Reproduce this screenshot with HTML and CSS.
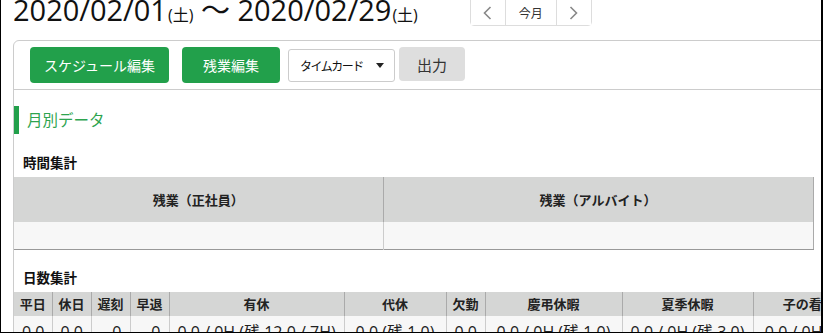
FILE: index.html
```html
<html>
  <head>
    <title>月別データ</title>
    <meta charset="utf-8" />
    <link rel="stylesheet" href="styles.css">
  </head>
  <body>
    <div class="frame"></div>

    <header class="top">
      <h1 class="range">2020/02/01<small>(土)</small> 〜 2020/02/29<small>(土)</small></h1>
      <div class="pager">
        <button class="pager-btn arrow">
          <svg width="9" height="14" viewBox="0 0 9 14"><polyline points="7.5,1 1.5,7 7.5,13" fill="none" stroke="#888" stroke-width="1.6" /></svg>
        </button>
        <button class="pager-btn now">今月</button>
        <button class="pager-btn arrow">
          <svg width="9" height="14" viewBox="0 0 9 14"><polyline points="1.5,1 7.5,7 1.5,13" fill="none" stroke="#888" stroke-width="1.6" /></svg>
        </button>
      </div>
    </header>

    <section class="panel">
      <div class="toolbar">
        <button class="btn green">スケジュール編集</button>
        <button class="btn green overtime">残業編集</button>
        <div class="select">
          <span>タイムカード</span>
          <i class="caret"></i>
        </div>
        <button class="btn gray">出力</button>
      </div>

      <div class="content">
        <h2 class="section-title">月別データ</h2>

        <h3 class="sub">時間集計</h3>
        <table class="sum hours">
          <colgroup>
            <col style="width: 369px" />
            <col style="width: 430px" />
          </colgroup>
          <thead>
            <tr>
              <th>残業（正社員）</th>
              <th>残業（アルバイト）</th>
            </tr>
          </thead>
          <tbody>
            <tr>
              <td></td>
              <td></td>
            </tr>
          </tbody>
        </table>

        <h3 class="sub">日数集計</h3>
        <table class="sum days">
          <colgroup>
            <col style="width: 38px" />
            <col style="width: 39px" />
            <col style="width: 39px" />
            <col style="width: 39px" />
            <col style="width: 175px" />
            <col style="width: 102px" />
            <col style="width: 39px" />
            <col style="width: 137px" />
            <col style="width: 131px" />
            <col style="width: 137px" />
          </colgroup>
          <thead>
            <tr>
              <th>平日</th>
              <th>休日</th>
              <th>遅刻</th>
              <th>早退</th>
              <th>有休</th>
              <th>代休</th>
              <th>欠勤</th>
              <th>慶弔休暇</th>
              <th>夏季休暇</th>
              <th>子の看護休暇</th>
            </tr>
          </thead>
          <tbody>
            <tr>
              <td class="num">0.0</td>
              <td class="num">0.0</td>
              <td class="num">0</td>
              <td class="num">0</td>
              <td>0.0 / 0H (残 12.0 / 7H)</td>
              <td>0.0 (残 1.0)</td>
              <td class="num">0.0</td>
              <td>0.0 / 0H (残 1.0)</td>
              <td>0.0 / 0H (残 3.0)</td>
              <td>0.0 / 0H (残 5.0)</td>
            </tr>
          </tbody>
        </table>
      </div>
    </section>
  </body>
</html>
```

FILE: styles.css
```css
html,
body {
  height: 100%;
}

body {
  margin: 0;
  padding-left: 13px;
  overflow: hidden;
  background: #fff;
  color: #222;
  font: 13px "Open Sans", "Noto Sans CJK JP", sans-serif;
}

/* window edge of the capture */
.frame {
  position: fixed;
  top: 0;
  left: 0;
  right: 0;
  bottom: 0;
  border-left: 1px solid #000;
  border-right: 2px solid #000;
  border-bottom: 1px solid #000;
  pointer-events: none;
  z-index: 10;
}

.top {
  display: flex;
  align-items: flex-start;
  height: 40px;
}

.range {
  margin: -7px 0 0;
  font-size: 29px;
  font-weight: normal;
  line-height: 34px;
  color: #111;
  white-space: nowrap;
}
.range small {
  font-size: 16px;
  margin-left: 1px;
}

.pager {
  display: flex;
  margin-left: 52px;
  margin-top: -1px;
  height: 27px;
  border: 1px solid #ddd;
  border-radius: 0 0 4px 4px;
  box-sizing: border-box;
}
.pager-btn {
  appearance: none;
  border: 0;
  background: #fff;
  margin: 0;
  padding: 0;
  display: flex;
  align-items: center;
  justify-content: center;
  font: 12px "Open Sans", "Noto Sans CJK JP", sans-serif;
  color: #333;
}
.pager-btn.arrow {
  width: 34px;
}
.pager-btn.now {
  width: 52px;
  border-left: 1px solid #ddd;
  border-right: 1px solid #ddd;
}

.panel {
  border: 1px solid #ccc;
  border-radius: 6px;
  margin-right: -40px;
}

.toolbar {
  display: flex;
  align-items: flex-start;
  padding: 6px 16px;
  border-bottom: 1px solid #ccc;
}

.btn {
  appearance: none;
  border: 0;
  border-radius: 4px;
  margin: 0;
  font: 14px "Open Sans", "Noto Sans CJK JP", sans-serif;
  cursor: pointer;
}
.btn.green {
  height: 36px;
  padding: 0 14px;
  background: #22a04b;
  color: #fff;
  margin-right: 13px;
}
.btn.green.overtime {
  padding: 0 21px;
  margin-right: 8px;
}
.btn.gray {
  height: 34px;
  width: 66px;
  background: #dedede;
  color: #333;
  font-size: 15px;
}

.select {
  display: flex;
  align-items: center;
  justify-content: space-between;
  box-sizing: border-box;
  width: 107px;
  height: 33px;
  margin-top: 2px;
  margin-right: 4px;
  padding: 0 10px 0 11px;
  border: 1px solid #ccc;
  border-radius: 3px;
  font-size: 12px;
  letter-spacing: -1.5px;
  white-space: nowrap;
  color: #111;
}
.caret {
  width: 0;
  height: 0;
  border-left: 4px solid transparent;
  border-right: 4px solid transparent;
  border-top: 5px solid #222;
}

.section-title {
  margin: 16px 0 0;
  height: 28px;
  line-height: 28px;
  border-left: 5px solid #22a04b;
  padding-left: 8px;
  font-size: 15.5px;
  font-weight: normal;
  color: #2ea44f;
}

.sub {
  margin: 19px 0 4px;
  padding-left: 9px;
  font-size: 13.5px;
  line-height: 20px;
  font-weight: bold;
  color: #111;
}
.section-title + .sub {
  margin-top: 19px;
}
.sum + .sub {
  margin-top: 18px;
}

.sum {
  border-collapse: collapse;
  table-layout: fixed;
}
.sum th {
  background: #d5d6d5;
  font-size: 13px;
  font-weight: bold;
  color: #222;
  padding: 0;
  border-left: 1px solid #aaa;
  white-space: nowrap;
  overflow: hidden;
}
.sum th:first-child {
  border-left: 0;
}
.sum td {
  background: #f7f7f7;
  border-left: 1px solid #ccc;
  padding: 0 8px;
  white-space: nowrap;
  overflow: hidden;
}
.sum td:first-child {
  border-left: 0;
}

.hours {
  width: 799px;
  border-right: 1px solid #aaa;
  border-bottom: 1px solid #999;
}
.hours th {
  height: 45px;
}
.hours td {
  height: 27px;
}

.days {
  width: 836px;
}
.days th {
  height: 24px;
}
.days td {
  height: 30px;
  padding-top: 6px;
  vertical-align: top;
  line-height: 20px;
  text-align: center;
}
.days td.num {
  text-align: right;
}
```
